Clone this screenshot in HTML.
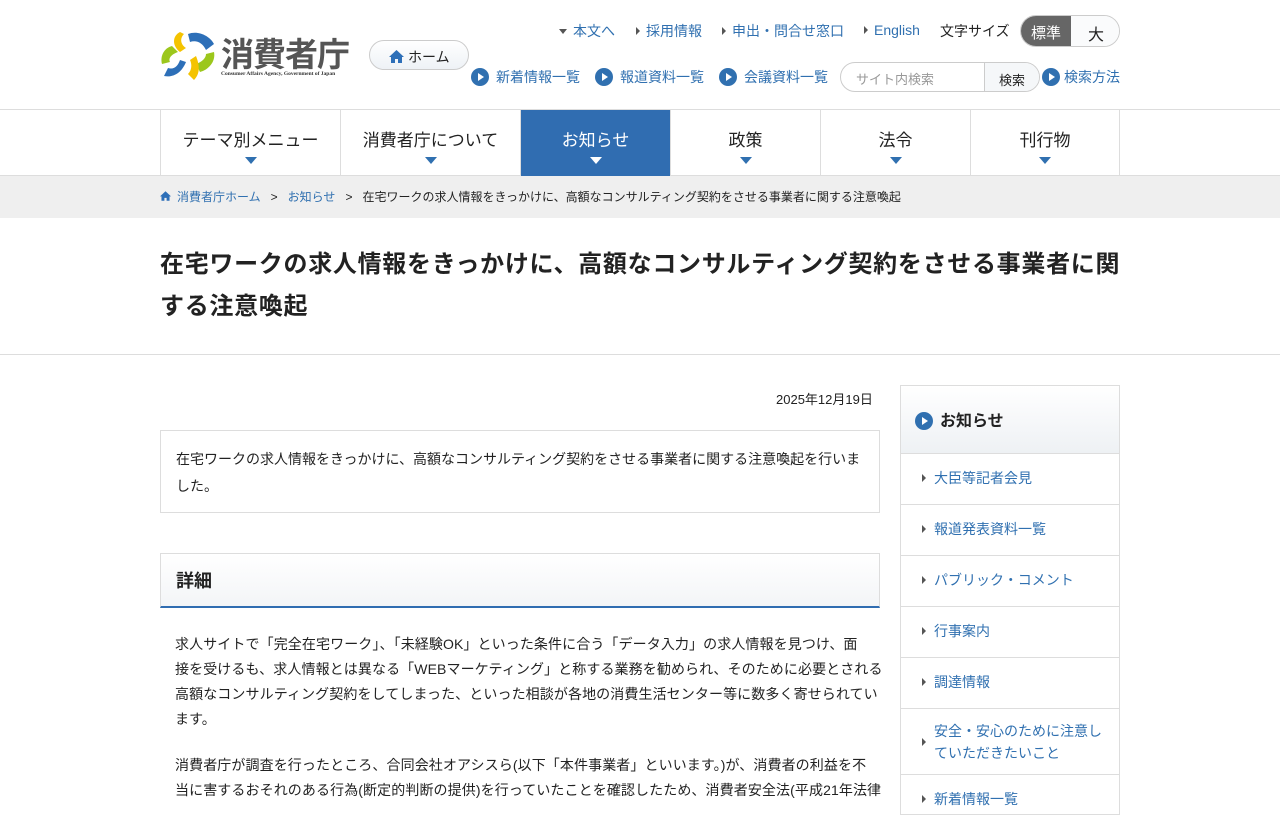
<!DOCTYPE html>
<html><head><meta charset="utf-8"><style>
*{margin:0;padding:0;box-sizing:border-box}
body{width:1280px;height:800px;overflow:hidden;font-family:"Liberation Sans","Noto Sans CJK JP",sans-serif;color:#222;background:#fff;position:relative}
a{color:#3070b0;text-decoration:none}
.abs{position:absolute}
.tri{display:inline-block;width:0;height:0;border-left:4px solid #555;border-top:4px solid transparent;border-bottom:4px solid transparent;margin-right:8px;vertical-align:1px}
.circ{display:inline-block;width:18px;height:18px;border-radius:50%;background:#3070b0;position:relative;vertical-align:-4px;margin-right:7px}
.circ:after{content:"";position:absolute;left:7px;top:5px;border-left:6px solid #fff;border-top:4px solid transparent;border-bottom:4px solid transparent}
.toplink{font-size:14px;top:21px}
.nav{position:absolute;top:109px;left:0;width:1280px;height:67px;border-top:1px solid #ddd;border-bottom:1px solid #ddd}
.nav div{position:absolute;top:0;height:66px;border-left:1px solid #ddd;text-align:center;font-size:17px;padding-top:16px}
.nav div:after{content:"";position:absolute;left:50%;margin-left:-6px;top:47px;border-top:7px solid #3070b0;border-left:6px solid transparent;border-right:6px solid transparent}
.nav div.on{background:#306db1;color:#fff}
.nav div.on:after{border-top-color:#fff}
.side div{border-top:1px solid #ddd;height:51px;font-size:14px;color:#3070b0;padding:14px 0 0 21px}
.p{font-size:14px;line-height:25px;position:absolute;left:175px;width:720px;white-space:nowrap;letter-spacing:0.1px}
</style></head><body>
<svg class="abs" style="left:160px;top:30px" width="56" height="52" viewBox="0 0 56 52">
<path d="M20 2 C12 6 12 16 20 22 L26 18 C20 14 20 8 24 4Z" fill="#f4c300"/>
<path d="M28 4 C38 0 50 6 54 14 L46 20 C42 12 36 10 30 12Z" fill="#2d6fb8"/>
<path d="M54 22 C56 32 48 40 40 42 L36 34 C42 32 46 28 46 24Z" fill="#9cc71c"/>
<path d="M36 26 C40 36 40 44 34 50 L28 44 C32 40 32 34 30 30Z" fill="#f4c300"/>
<path d="M26 32 C22 42 14 48 4 46 L8 38 C14 40 18 36 20 30Z" fill="#2d6fb8"/>
<path d="M2 34 C0 26 4 18 12 16 L18 22 C12 24 8 28 10 32Z" fill="#9cc71c"/>
</svg>
<div class="abs" style="left:221px;top:28px;font-size:33px;color:#555;letter-spacing:-1px;font-weight:bold">消費者庁</div>
<div class="abs" style="left:221px;top:71px;font-size:5.5px;color:#333;font-family:'Liberation Serif',serif;font-weight:bold">Consumer Affairs Agency, Government of Japan</div>
<div class="abs" style="left:369px;top:40px;width:100px;height:30px;border:1px solid #ccc;border-radius:15px;background:linear-gradient(#fff,#eef2f6);font-size:14px;padding:6px 0 0 19px">
<svg width="15" height="13" viewBox="0 0 15 13" style="vertical-align:-1px;margin-right:4px"><path d="M7.5 0 L15 7 H13 V13 H9 V9 H6 V13 H2 V7 H0Z" fill="#2d6fb8"/></svg>ホーム</div>
<div class="abs toplink" style="left:559px"><span style="display:inline-block;border-top:5px solid #555;border-left:4px solid transparent;border-right:4px solid transparent;margin-right:6px;vertical-align:2px"></span><a>本文へ</a></div>
<div class="abs toplink" style="left:636px"><span class="tri" style="margin-right:6px"></span><a>採用情報</a></div>
<div class="abs toplink" style="left:722px"><span class="tri" style="margin-right:6px"></span><a>申出・問合せ窓口</a></div>
<div class="abs toplink" style="left:864px;top:22px"><span class="tri" style="margin-right:6px"></span><a>English</a></div>
<div class="abs toplink" style="left:940px;color:#222">文字サイズ</div>
<div class="abs" style="left:1020px;top:15px;width:100px;height:32px;border:1px solid #ccc;border-radius:16px;overflow:hidden;font-size:15px">
<div class="abs" style="left:0;top:0;width:50px;height:32px;background:#666;color:#fff;text-align:center;padding-top:6px">標準</div>
<div class="abs" style="left:50px;top:0;width:50px;height:32px;background:#fafbfc;text-align:center;padding-top:5px;font-size:16px">大</div></div>
<div class="abs" style="left:471px;top:67px;font-size:14px"><span class="circ"></span><a>新着情報一覧</a></div>
<div class="abs" style="left:595px;top:67px;font-size:14px"><span class="circ"></span><a>報道資料一覧</a></div>
<div class="abs" style="left:719px;top:67px;font-size:14px"><span class="circ"></span><a>会議資料一覧</a></div>
<div class="abs" style="left:840px;top:62px;width:200px;height:30px;border:1px solid #ccc;border-radius:15px;overflow:hidden;font-size:13px">
<div class="abs" style="left:15px;top:6px;color:#999">サイト内検索</div>
<div class="abs" style="left:143px;top:0;width:57px;height:30px;border-left:1px solid #ccc;background:#f5f7f9;padding:7px 0 0 14px">検索</div></div>
<div class="abs" style="left:1042px;top:67px;font-size:14px"><span class="circ" style="margin-right:4px"></span><a>検索方法</a></div>
<div class="nav">
<div style="left:160px;width:180px">テーマ別メニュー</div>
<div style="left:340px;width:180px">消費者庁について</div>
<div class="on" style="left:520px;width:150px">お知らせ</div>
<div style="left:670px;width:150px">政策</div>
<div style="left:820px;width:150px">法令</div>
<div style="left:970px;width:150px;border-right:1px solid #ddd">刊行物</div>
</div>
<div class="abs" style="left:0;top:176px;width:1280px;height:42px;background:#efefef;font-size:12px;padding:12px 0 0 160px">
<svg width="11" height="10" viewBox="0 0 15 13" style="margin-right:6px"><path d="M7.5 0 L15 7 H13 V13 H9 V9 H6 V13 H2 V7 H0Z" fill="#2d6fb8"/></svg><a>消費者庁ホーム</a>&nbsp;&nbsp; &gt; &nbsp;&nbsp;<a>お知らせ</a>&nbsp;&nbsp; &gt; &nbsp;&nbsp;在宅ワークの求人情報をきっかけに、高額なコンサルティング契約をさせる事業者に関する注意喚起</div>
<div class="abs" style="left:160px;top:244px;width:1000px;font-size:24px;font-weight:bold;line-height:42px;white-space:nowrap;letter-spacing:0.7px">在宅ワークの求人情報をきっかけに、高額なコンサルティング契約をさせる事業者に関<br>する注意喚起</div>
<div class="abs" style="left:0;top:354px;width:1280px;border-top:1px solid #ddd"></div>
<div class="abs" style="left:776px;top:389px;font-size:13px">2025年12月19日</div>
<div class="abs" style="left:160px;top:430px;width:720px;height:83px;border:1px solid #ddd;padding:15px 15px;font-size:14px;line-height:27px">在宅ワークの求人情報をきっかけに、高額なコンサルティング契約をさせる事業者に関する注意喚起を行いました。</div>
<div class="abs" style="left:160px;top:553px;width:720px;height:55px;border:1px solid #ddd;border-bottom:2px solid #306db1;background:linear-gradient(#fff,#f3f5f7);font-size:18px;font-weight:bold;padding:13px 15px">詳細</div>
<div class="p" style="top:632px">求人サイトで「完全在宅ワーク」、「未経験OK」といった条件に合う「データ入力」の求人情報を見つけ、面<br>接を受けるも、求人情報とは異なる「WEBマーケティング」と称する業務を勧められ、そのために必要とされる<br>高額なコンサルティング契約をしてしまった、といった相談が各地の消費生活センター等に数多く寄せられてい<br>ます。</div>
<div class="p" style="top:753px">消費者庁が調査を行ったところ、合同会社オアシスら(以下「本件事業者」といいます。)が、消費者の利益を不<br>当に害するおそれのある行為(断定的判断の提供)を行っていたことを確認したため、消費者安全法(平成21年法律</div>
<div class="abs side" style="left:900px;top:385px;width:220px;height:430px;border:1px solid #ddd;border-top:1px solid #ddd">
<div style="border-top:none;height:67px;background:linear-gradient(#fff,#eef1f4);font-size:16px;font-weight:bold;color:#222;padding:21px 0 0 14px"><span class="circ"></span>お知らせ</div>
<div><span class="tri"></span>大臣等記者会見</div>
<div><span class="tri"></span>報道発表資料一覧</div>
<div><span class="tri"></span>パブリック・コメント</div>
<div><span class="tri"></span>行事案内</div>
<div><span class="tri"></span>調達情報</div>
<div style="height:66px;padding:0 10px 0 21px;line-height:22px;display:flex;align-items:center"><span class="tri"></span><span>安全・安心のために注意していただきたいこと</span></div>
<div><span class="tri"></span>新着情報一覧</div>
</div>
</body></html>
